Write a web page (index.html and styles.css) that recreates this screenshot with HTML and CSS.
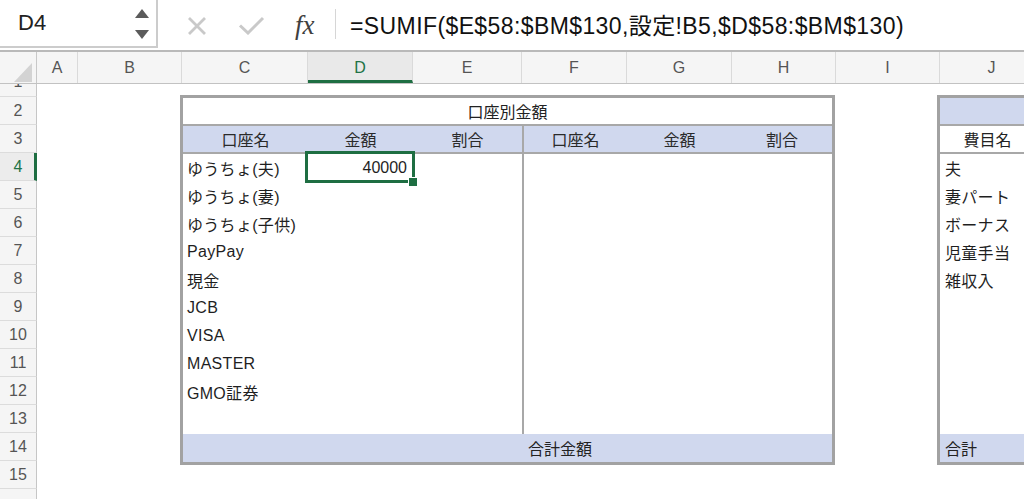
FILE: index.html
```html
<!DOCTYPE html>
<html lang="ja">
<head>
<meta charset="utf-8">
<title>口座別金額</title>
<link rel="stylesheet" href="styles.css">
</head>
<body>
<div class="formula-bar">
  <div class="namebox">
    <span class="ref">D4</span>
    <svg class="spin" width="14" height="30" viewBox="0 0 14 30"><polygon points="7,0 14,9 0,9" fill="#5b5b5b"/><polygon points="0,21 14,21 7,30" fill="#5b5b5b"/></svg>
  </div>
  <div class="tools">
    <svg class="cancel" width="20" height="20" viewBox="0 0 20 20"><path d="M2 2 L18 18 M18 2 L2 18" stroke="#c9c9c9" stroke-width="2.8" fill="none"/></svg>
    <svg class="enter" width="27" height="20" viewBox="0 0 27 20"><path d="M2 10.5 L10 18 L25 3" stroke="#c9c9c9" stroke-width="3" fill="none"/></svg>
    <span class="fx">fx</span>
    <span class="sep"></span>
  </div>
  <div class="formula">=SUMIF($E$58:$BM$130,設定!B5,$D$58:$BM$130)</div>
</div>

<div class="col-headers">
  <div class="corner"><svg width="18" height="19" viewBox="0 0 18 19"><polygon points="18,0 18,19 0,19" fill="#d3d3d3"/></svg></div>
  <div class="ch w-a">A</div>
  <div class="ch w-b">B</div>
  <div class="ch w-c">C</div>
  <div class="ch w-d sel">D</div>
  <div class="ch w-e">E</div>
  <div class="ch w-f">F</div>
  <div class="ch w-g">G</div>
  <div class="ch w-h">H</div>
  <div class="ch w-i">I</div>
  <div class="ch w-j">J</div>
</div>

<div class="sheet">
  <div class="row-headers">
    <div class="rh r1"><span>1</span></div>
    <div class="rh">2</div>
    <div class="rh">3</div>
    <div class="rh sel">4</div>
    <div class="rh">5</div>
    <div class="rh">6</div>
    <div class="rh">7</div>
    <div class="rh">8</div>
    <div class="rh">9</div>
    <div class="rh">10</div>
    <div class="rh">11</div>
    <div class="rh">12</div>
    <div class="rh">13</div>
    <div class="rh">14</div>
    <div class="rh">15</div>
    <div class="rh"></div>
  </div>

  <div class="canvas">
    <div class="acct-table">
      <div class="title">口座別金額</div>
      <div class="head">
        <div class="hc">口座名</div>
        <div class="hc">金額</div>
        <div class="hc">割合</div>
        <div class="hc split">口座名</div>
        <div class="hc">金額</div>
        <div class="hc">割合</div>
      </div>
      <div class="body">
        <div class="half">
          <div class="row"><div class="cell">ゆうちょ(夫)</div><div class="cell num active">40000</div><div class="cell"></div></div>
          <div class="row"><div class="cell">ゆうちょ(妻)</div><div class="cell"></div><div class="cell"></div></div>
          <div class="row"><div class="cell">ゆうちょ(子供)</div><div class="cell"></div><div class="cell"></div></div>
          <div class="row"><div class="cell">PayPay</div><div class="cell"></div><div class="cell"></div></div>
          <div class="row"><div class="cell">現金</div><div class="cell"></div><div class="cell"></div></div>
          <div class="row"><div class="cell">JCB</div><div class="cell"></div><div class="cell"></div></div>
          <div class="row"><div class="cell">VISA</div><div class="cell"></div><div class="cell"></div></div>
          <div class="row"><div class="cell">MASTER</div><div class="cell"></div><div class="cell"></div></div>
          <div class="row"><div class="cell">GMO証券</div><div class="cell"></div><div class="cell"></div></div>
          <div class="row"><div class="cell"></div><div class="cell"></div><div class="cell"></div></div>
        </div>
        <div class="half right"></div>
      </div>
      <div class="total">合計金額</div>
    </div>

    <div class="exp-table">
      <div class="band"></div>
      <div class="exp-head">費目名</div>
      <div class="exp-body">
        <div class="cell">夫</div>
        <div class="cell">妻パート</div>
        <div class="cell">ボーナス</div>
        <div class="cell">児童手当</div>
        <div class="cell">雑収入</div>
      </div>
      <div class="exp-total">合計</div>
    </div>
  </div>
</div>
</body>
</html>
```

FILE: styles.css
```css
html, body {
  margin: 0;
  padding: 0;
}
body {
  width: 1024px;
  height: 499px;
  overflow: hidden;
  background: #ffffff;
  font-family: "Liberation Sans", "Noto Sans CJK JP", sans-serif;
  color: #1f1f1f;
}

/* formula bar */
.formula-bar {
  height: 50px;
  display: flex;
  align-items: flex-start;
  background: #ffffff;
}
.namebox {
  box-sizing: border-box;
  width: 158px;
  height: 48px;
  border-right: 2px solid #cccccc;
  border-bottom: 2px solid #cccccc;
  display: flex;
  align-items: center;
  justify-content: space-between;
  padding: 0 7px 0 18px;
  flex: none;
}
.ref {
  font-size: 22px;
  color: #222222;
}
.spin {
  margin-top: 2px;
}
.tools {
  height: 48px;
  display: flex;
  align-items: center;
  padding-left: 29px;
  flex: none;
}
.cancel {
  margin-right: 31px;
  margin-top: 4px;
}
.enter {
  margin-right: 30px;
  margin-top: 2px;
}
.fx {
  font-family: "Liberation Serif", serif;
  font-style: italic;
  font-size: 27px;
  color: #3f3f3f;
  width: 27px;
  margin-top: 2px;
}
.sep {
  width: 1px;
  height: 30px;
  background: #d6d6d6;
  margin-left: 13px;
}
.formula {
  height: 48px;
  display: flex;
  align-items: center;
  padding-left: 14px;
  font-size: 23px;
  letter-spacing: 0.4px;
  color: #111111;
  white-space: nowrap;
}

/* column headers */
.col-headers {
  display: flex;
  height: 31px;
  border-top: 2px solid #b9b9b9;
  border-bottom: 1px solid #c2c2c2;
  background: #f5f5f5;
  overflow: hidden;
}
.corner {
  box-sizing: border-box;
  width: 37px;
  flex: none;
  border-right: 1px solid #c8c8c8;
  display: flex;
  align-items: flex-end;
  justify-content: flex-end;
  padding: 0 4px 1px 0;
}
.ch {
  box-sizing: border-box;
  flex: none;
  border-right: 1px solid #dadada;
  display: flex;
  align-items: center;
  justify-content: center;
  font-size: 16px;
  color: #555555;
}
.ch.sel {
  background: #e9e9e9;
  color: #217346;
  border-bottom: 3px solid #1e6e42;
  padding-top: 3px;
}
.w-a { width: 41px; }
.w-b { width: 104px; }
.w-c { width: 126px; }
.w-d { width: 105px; }
.w-e { width: 109px; }
.w-f { width: 105px; }
.w-g { width: 105px; }
.w-h { width: 104px; }
.w-i { width: 104px; }
.w-j { width: 104px; }

/* sheet */
.sheet {
  display: flex;
  height: 415px;
  overflow: hidden;
}
.row-headers {
  width: 37px;
  flex: none;
  display: flex;
  flex-direction: column;
  background: #f5f5f5;
}
.rh {
  box-sizing: border-box;
  height: 28px;
  flex: none;
  border-bottom: 1px solid #dcdcdc;
  border-right: 1px solid #c6c6c6;
  display: flex;
  align-items: center;
  justify-content: center;
  font-size: 16px;
  color: #555555;
}
.rh.r1 {
  height: 13px;
  align-items: flex-end;
  overflow: hidden;
}
.rh.r1 span {
  line-height: 28px;
  height: 28px;
}
.rh.sel {
  background: #ececec;
  color: #217346;
  border-right: 3px solid #1e6e42;
  padding-left: 2px;
}

.canvas {
  flex: 1;
  overflow: hidden;
  display: grid;
  grid-template-columns: 41px 104px 126px 105px 109px 105px 105px 104px 104px 104px;
  grid-template-rows: 13px repeat(14, 28px) 1fr;
}

/* account table */
.acct-table {
  grid-column: 3 / 9;
  grid-row: 2 / 15;
  margin: -2px 1px -4px -2px;
  border: 3px solid #a2a2a2;
  display: grid;
  grid-template-rows: 28px 28px 1fr 28px;
  font-size: 16px;
}
.title {
  box-sizing: border-box;
  border-bottom: 2px solid #a8a8a8;
  display: flex;
  align-items: center;
  justify-content: center;
  color: #222222;
}
.head {
  box-sizing: border-box;
  display: grid;
  grid-template-columns: 125px 105px 109px 105px 105px 100px;
  background: #d0d8ee;
  border-bottom: 2px solid #a8a8a8;
}
.hc {
  display: flex;
  align-items: center;
  justify-content: center;
  color: #2a2a2a;
}
.hc.split {
  border-left: 2px solid #a8a8a8;
}
.body {
  display: grid;
  grid-template-columns: 339px 310px;
}
.half {
  display: flex;
  flex-direction: column;
}
.half.right {
  border-left: 2px solid #a8a8a8;
}
.row {
  display: grid;
  grid-template-columns: 125px 105px 109px;
  height: 28px;
  flex: none;
}
.cell {
  display: flex;
  align-items: center;
  padding: 0 4px;
  white-space: nowrap;
  color: #1f1f1f;
  letter-spacing: 0.3px;
}
.cell.num {
  justify-content: flex-end;
  padding-right: 6px;
  letter-spacing: 0;
}
.cell.active {
  position: relative;
}
.cell.active::before {
  content: "";
  position: absolute;
  top: -3px;
  right: -2px;
  bottom: -1px;
  left: -3px;
  border: 3px solid #1e6e42;
}
.cell.active::after {
  content: "";
  position: absolute;
  right: -5px;
  bottom: -5px;
  width: 8px;
  height: 8px;
  background: #1e6e42;
  border: 1px solid #ffffff;
}
.total {
  background: #d0d8ee;
  display: flex;
  align-items: center;
  justify-content: center;
  padding-left: 105px;
  color: #222222;
}

/* expense table */
.exp-table {
  grid-column: 10 / 11;
  grid-row: 2 / 15;
  margin: -2px 6px -4px -3px;
  border: 3px solid #a2a2a2;
  display: grid;
  grid-template-rows: 28px 28px 1fr 28px;
  font-size: 16px;
}
.band {
  box-sizing: border-box;
  background: #d0d8ee;
  border-bottom: 2px solid #a8a8a8;
}
.exp-head {
  box-sizing: border-box;
  border-bottom: 2px solid #a8a8a8;
  display: flex;
  align-items: center;
  justify-content: center;
  color: #222222;
}
.exp-body {
  display: flex;
  flex-direction: column;
}
.exp-body .cell {
  height: 28px;
  padding-left: 5px;
}
.exp-total {
  background: #d0d8ee;
  display: flex;
  align-items: center;
  padding-left: 5px;
  color: #222222;
}
```
